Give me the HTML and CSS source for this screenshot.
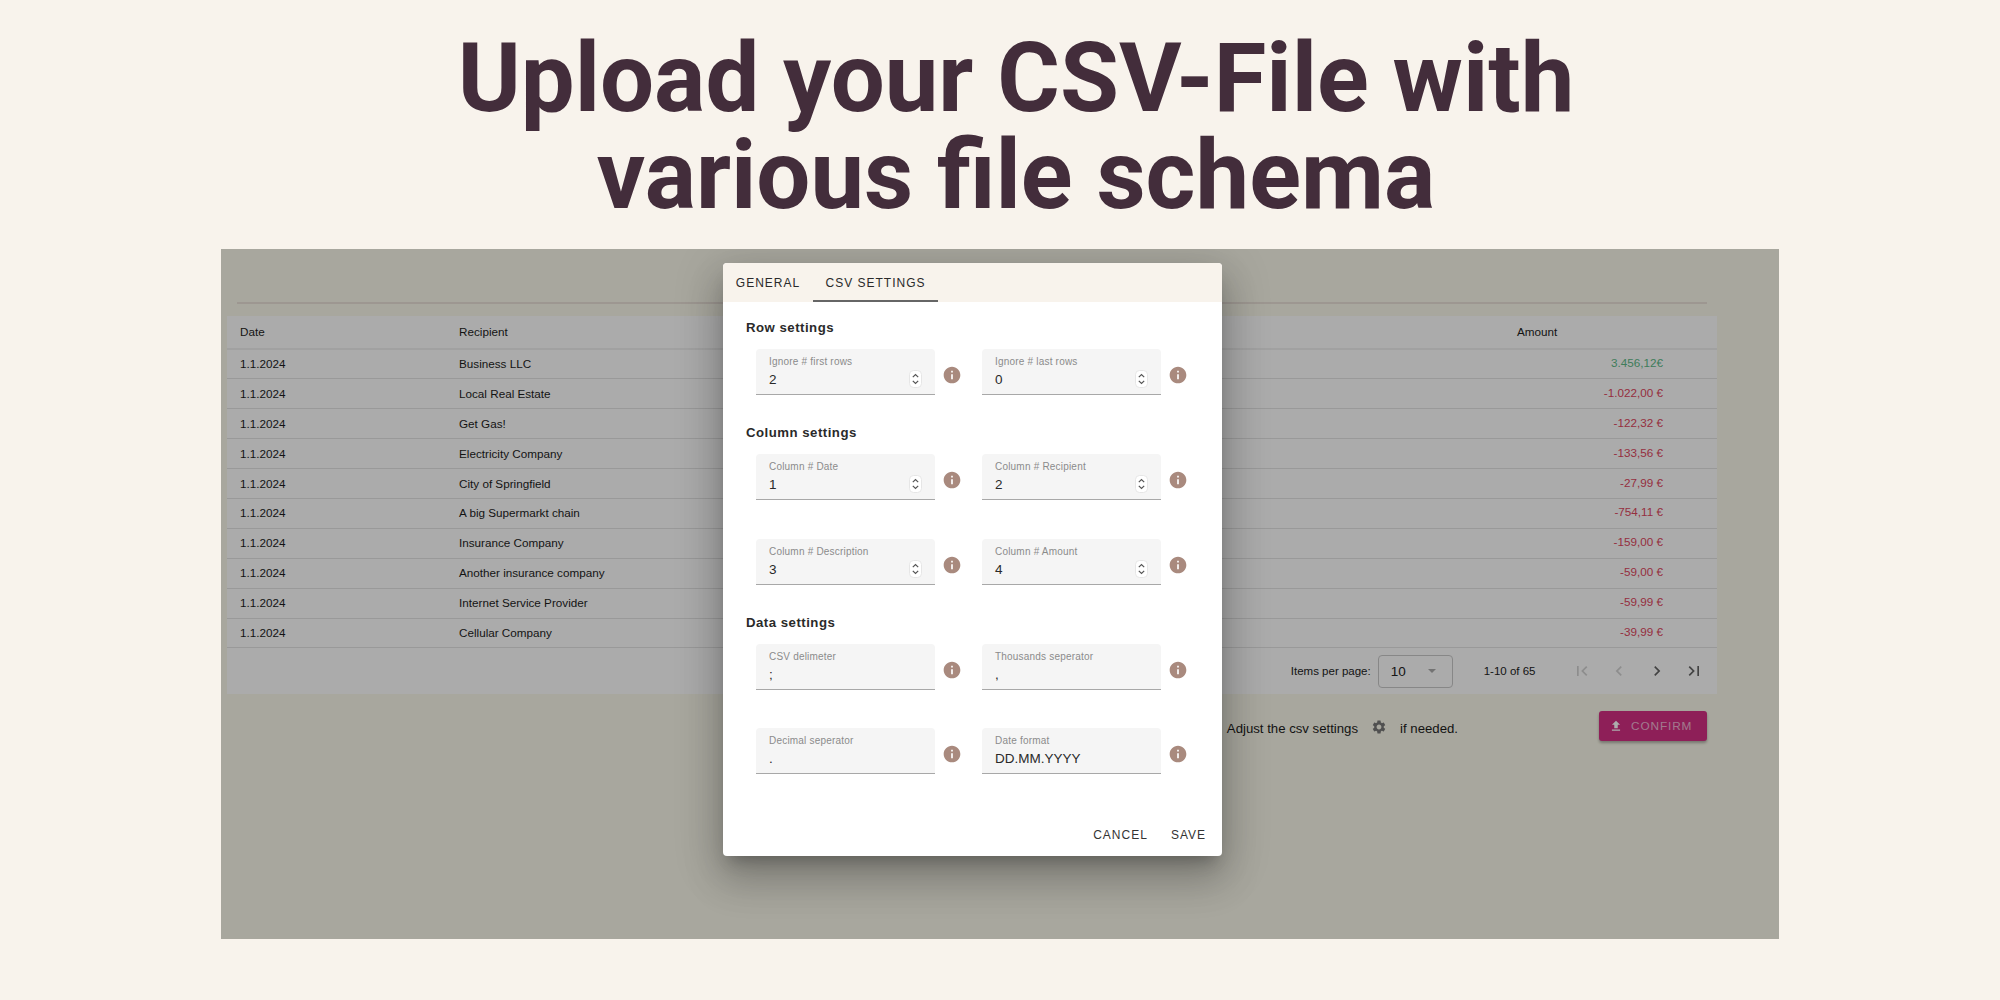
FILE: index.html
```html
<!DOCTYPE html>
<html lang="en">
<head>
    <meta charset="UTF-8">
    <title>Upload your CSV-File with various file schema</title>
    <link rel="stylesheet" href="styles.css">
</head>
<body>
    <svg class="icon-defs" width="0" height="0">
        <symbol id="i-info" viewBox="0 0 24 24"><path d="M12 2C6.48 2 2 6.48 2 12s4.48 10 10 10 10-4.48 10-10S17.52 2 12 2zm1 15h-2v-6h2v6zm0-8h-2V7h2v2z"/></symbol>
        <symbol id="i-gear" viewBox="0 0 24 24"><path d="M19.14 12.94c.04-.3.06-.61.06-.94 0-.32-.02-.64-.07-.94l2.03-1.58a.49.49 0 0 0 .12-.61l-1.92-3.32a.488.488 0 0 0-.59-.22l-2.39.96c-.5-.38-1.03-.7-1.62-.94l-.36-2.54a.484.484 0 0 0-.48-.41h-3.84c-.24 0-.43.17-.47.41l-.36 2.54c-.59.24-1.13.57-1.62.94l-2.39-.96c-.22-.08-.47 0-.59.22L2.74 8.87c-.12.21-.08.47.12.61l2.03 1.58c-.05.3-.09.63-.09.94s.02.64.07.94l-2.03 1.58a.49.49 0 0 0-.12.61l1.92 3.32c.12.22.37.29.59.22l2.39-.96c.5.38 1.03.7 1.62.94l.36 2.54c.05.24.24.41.48.41h3.84c.24 0 .44-.17.47-.41l.36-2.54c.59-.24 1.13-.56 1.62-.94l2.39.96c.22.08.47 0 .59-.22l1.92-3.32c.12-.22.07-.47-.12-.61l-2.01-1.58zM12 15.6c-1.98 0-3.6-1.62-3.6-3.6s1.62-3.6 3.6-3.6 3.6 1.62 3.6 3.6-1.62 3.6-3.6 3.6z"/></symbol>
        <symbol id="i-upload" viewBox="0 0 24 24"><path d="M9 16h6v-6h4l-7-7-7 7h4zm-4 2h14v2H5z"/></symbol>
        <symbol id="i-first" viewBox="0 0 24 24"><path d="M18.41 16.59L13.82 12l4.59-4.59L17 6l-6 6 6 6zM6 6h2v12H6z"/></symbol>
        <symbol id="i-prev" viewBox="0 0 24 24"><path d="M15.41 7.41L14 6l-6 6 6 6 1.41-1.41L10.83 12z"/></symbol>
        <symbol id="i-next" viewBox="0 0 24 24"><path d="M10 6L8.59 7.41 13.17 12l-4.58 4.59L10 18l6-6z"/></symbol>
        <symbol id="i-last" viewBox="0 0 24 24"><path d="M5.59 7.41L10.18 12l-4.59 4.59L7 18l6-6-6-6zM16 6h2v12h-2z"/></symbol>
        <symbol id="i-spin" viewBox="0 0 13 18">
            <rect x="0.5" y="0.5" width="12" height="17" rx="4" fill="#fff" stroke="#e6e6e6"/>
            <path d="M3.8 7.2L6.5 4.5l2.7 2.7M3.8 10.8l2.7 2.7 2.7-2.7" fill="none" stroke="#555" stroke-width="1.2"/>
        </symbol>
    </svg>

    <h1 class="headline">Upload your CSV-File with<br>various file schema</h1>

    <div class="shot">
        <div class="divider"></div>

        <div class="table-card">
            <table class="tx-table">
                <colgroup>
                    <col class="col-date"><col class="col-recipient"><col><col class="col-amount">
                </colgroup>
                <thead>
                    <tr><th>Date</th><th>Recipient</th><th></th><th>Amount</th></tr>
                </thead>
                <tbody>
                    <tr><td>1.1.2024</td><td>Business LLC</td><td></td><td class="amount pos">3.456,12€</td></tr>
                    <tr><td>1.1.2024</td><td>Local Real Estate</td><td></td><td class="amount neg">-1.022,00 €</td></tr>
                    <tr><td>1.1.2024</td><td>Get Gas!</td><td></td><td class="amount neg">-122,32 €</td></tr>
                    <tr><td>1.1.2024</td><td>Electricity Company</td><td></td><td class="amount neg">-133,56 €</td></tr>
                    <tr><td>1.1.2024</td><td>City of Springfield</td><td></td><td class="amount neg">-27,99 €</td></tr>
                    <tr><td>1.1.2024</td><td>A big Supermarkt chain</td><td></td><td class="amount neg">-754,11 €</td></tr>
                    <tr><td>1.1.2024</td><td>Insurance Company</td><td></td><td class="amount neg">-159,00 €</td></tr>
                    <tr><td>1.1.2024</td><td>Another insurance company</td><td></td><td class="amount neg">-59,00 €</td></tr>
                    <tr><td>1.1.2024</td><td>Internet Service Provider</td><td></td><td class="amount neg">-59,99 €</td></tr>
                    <tr><td>1.1.2024</td><td>Cellular Company</td><td></td><td class="amount neg">-39,99 €</td></tr>
                </tbody>
            </table>
            <div class="paginator">
                <span class="per-page">Items per page:</span>
                <div class="page-select"><span>10</span><i class="select-arrow"></i></div>
                <span class="page-range">1-10 of 65</span>
                <div class="page-btns">
                    <svg class="page-icon off"><use href="#i-first"/></svg>
                    <svg class="page-icon off"><use href="#i-prev"/></svg>
                    <svg class="page-icon"><use href="#i-next"/></svg>
                    <svg class="page-icon"><use href="#i-last"/></svg>
                </div>
            </div>
        </div>

        <div class="confirm-row">
            <span>Adjust the csv settings</span>
            <svg class="gear"><use href="#i-gear"/></svg>
            <span>if needed.</span>
            <button class="confirm-btn"><svg><use href="#i-upload"/></svg>CONFIRM</button>
        </div>

        <div class="scrim"></div>

        <div class="dialog">
            <div class="tabs">
                <div class="tab tab-general">GENERAL</div>
                <div class="tab tab-csv">CSV SETTINGS</div>
            </div>
            <div class="dialog-body">
                <h3 class="group-title">Row settings</h3>
                <div class="field-grid">
                    <div class="field-wrap">
                        <div class="field"><label>Ignore # first rows</label><div class="value">2</div><svg class="spin"><use href="#i-spin"/></svg></div>
                        <svg class="info"><use href="#i-info"/></svg>
                    </div>
                    <div class="field-wrap">
                        <div class="field"><label>Ignore # last rows</label><div class="value">0</div><svg class="spin"><use href="#i-spin"/></svg></div>
                        <svg class="info"><use href="#i-info"/></svg>
                    </div>
                </div>

                <h3 class="group-title">Column settings</h3>
                <div class="field-grid">
                    <div class="field-wrap">
                        <div class="field"><label>Column # Date</label><div class="value">1</div><svg class="spin"><use href="#i-spin"/></svg></div>
                        <svg class="info"><use href="#i-info"/></svg>
                    </div>
                    <div class="field-wrap">
                        <div class="field"><label>Column # Recipient</label><div class="value">2</div><svg class="spin"><use href="#i-spin"/></svg></div>
                        <svg class="info"><use href="#i-info"/></svg>
                    </div>
                    <div class="field-wrap">
                        <div class="field"><label>Column # Description</label><div class="value">3</div><svg class="spin"><use href="#i-spin"/></svg></div>
                        <svg class="info"><use href="#i-info"/></svg>
                    </div>
                    <div class="field-wrap">
                        <div class="field"><label>Column # Amount</label><div class="value">4</div><svg class="spin"><use href="#i-spin"/></svg></div>
                        <svg class="info"><use href="#i-info"/></svg>
                    </div>
                </div>

                <h3 class="group-title">Data settings</h3>
                <div class="field-grid">
                    <div class="field-wrap">
                        <div class="field"><label>CSV delimeter</label><div class="value">;</div></div>
                        <svg class="info"><use href="#i-info"/></svg>
                    </div>
                    <div class="field-wrap">
                        <div class="field"><label>Thousands seperator</label><div class="value">,</div></div>
                        <svg class="info"><use href="#i-info"/></svg>
                    </div>
                    <div class="field-wrap">
                        <div class="field"><label>Decimal seperator</label><div class="value">.</div></div>
                        <svg class="info"><use href="#i-info"/></svg>
                    </div>
                    <div class="field-wrap">
                        <div class="field"><label>Date format</label><div class="value">DD.MM.YYYY</div></div>
                        <svg class="info"><use href="#i-info"/></svg>
                    </div>
                </div>
            </div>
            <div class="dialog-actions">
                <span>CANCEL</span>
                <span>SAVE</span>
            </div>
        </div>
    </div>
</body>
</html>
```

FILE: styles.css
```css
* {
    box-sizing: border-box;
}

body {
    margin: 0;
    background-color: #f8f3ec;
    font-family: "Liberation Sans", Arial, sans-serif;
}

.icon-defs {
    position: absolute;
}

.headline {
    margin: 0;
    height: 249px;
    padding: 30px 0 0 32px;
    font-family: Roboto, sans-serif;
    font-size: 95.8px;
    font-weight: 700;
    line-height: 97px;
    text-align: center;
    font-variant-ligatures: common-ligatures;
    color: #432d3b;
}

.shot {
    position: relative;
    width: 1558px;
    height: 690px;
    margin: 0 auto;
    padding-top: 53px;
    overflow: hidden;
    background-color: #f8f7e9;
    font-size: 11.7px;
    color: #1c1c1c;
}

.divider {
    height: 2px;
    margin: 0 72px 0 16px;
    background-color: #e8dfd6;
}

.table-card {
    margin: 12px 62px 0 6px;
    background-color: #fcfcfc;
}

.tx-table {
    width: 100%;
    border-collapse: collapse;
    table-layout: fixed;
}

.col-date {
    width: 219px;
}

.col-recipient {
    width: 400px;
}

.col-amount {
    width: 213px;
}

.tx-table th,
.tx-table td {
    padding: 0 13px 1px;
    font-weight: 400;
    text-align: left;
    border-bottom: 1px solid #e2e2e2;
}

.tx-table th {
    height: 33px;
    border-bottom-width: 2px;
    border-bottom-color: #eee;
}

.tx-table td {
    height: 29.9px;
}

.tx-table .amount {
    padding: 0 54px 3px 0;
    text-align: right;
}

.pos {
    color: #5db887;
}

.neg {
    color: #dc465e;
}

.paginator {
    display: flex;
    align-items: center;
    justify-content: flex-end;
    height: 46px;
    padding-right: 13px;
    font-size: 11.5px;
    color: #222;
}

.per-page {
    margin-right: 7px;
}

.page-select {
    display: flex;
    align-items: center;
    justify-content: space-between;
    width: 75px;
    height: 33px;
    padding: 0 16px 0 12px;
    font-size: 13.5px;
    border: 1px solid #c8c8c8;
    border-radius: 4px;
}

.select-arrow {
    border-top: 4px solid #aaa;
    border-left: 4px solid transparent;
    border-right: 4px solid transparent;
}

.page-range {
    margin: 0 36px 0 31px;
}

.page-btns {
    display: flex;
    gap: 17.5px;
}

.page-icon {
    width: 20px;
    height: 20px;
    fill: #646464;
}

.page-icon.off {
    fill: #d0d0d0;
}

.confirm-row {
    display: flex;
    align-items: center;
    justify-content: flex-end;
    margin: 17px 72px 0 0;
    font-size: 13.2px;
}

.gear {
    width: 16px;
    height: 16px;
    margin: 2px 13px 0;
    fill: #777;
}

.confirm-row span {
    padding-top: 4px;
}

.confirm-btn {
    display: flex;
    align-items: center;
    gap: 8px;
    width: 108px;
    height: 30px;
    margin-left: 141px;
    padding: 0 0 0 10px;
    border: none;
    border-radius: 3px;
    background-color: #d22e82;
    box-shadow: 0 2px 3px rgba(0, 0, 0, 0.3);
    font-family: "Liberation Sans", Arial, sans-serif;
    font-size: 11.8px;
    letter-spacing: 0.9px;
    color: rgba(255, 255, 255, 0.65);
}

.confirm-btn svg {
    width: 14px;
    height: 14px;
    fill: #fff;
}

.scrim {
    position: absolute;
    top: 0;
    right: 0;
    bottom: 0;
    left: 0;
    background-color: rgba(0, 0, 0, 0.32);
}

.dialog {
    position: absolute;
    top: 14px;
    left: 502px;
    width: 499px;
    height: 593px;
    border-radius: 4px;
    background-color: #fff;
    box-shadow: 0 11px 15px -7px rgba(0, 0, 0, 0.25), 0 24px 38px 3px rgba(0, 0, 0, 0.16), 0 9px 46px 8px rgba(0, 0, 0, 0.14);
}

.tabs {
    display: flex;
    height: 39px;
    border-radius: 4px 4px 0 0;
    background-color: #f8f3ec;
    font-size: 12px;
    letter-spacing: 1px;
    color: #2a2a2a;
}

.tab {
    height: 39px;
    padding-top: 1px;
    line-height: 38px;
    text-align: center;
}

.tab-general {
    width: 90px;
}

.tab-csv {
    width: 125px;
    border-bottom: 2px solid #666;
}

.dialog-body {
    padding: 16px 0 0 23px;
}

.group-title {
    margin: 0 0 11px;
    font-size: 13.2px;
    font-weight: 700;
    line-height: 20px;
    letter-spacing: 0.5px;
    color: #2a2a2a;
}

.field-grid {
    display: grid;
    grid-template-columns: 226px 226px;
    row-gap: 38.5px;
    padding-left: 10px;
    margin-bottom: 28px;
}

.field-wrap {
    display: flex;
    align-items: center;
    gap: 6.5px;
}

.field {
    position: relative;
    width: 179px;
    height: 46px;
    padding: 6px 13px 0;
    border-bottom: 1px solid #a8a8a8;
    border-radius: 4px 4px 0 0;
    background-color: #f5f5f5;
}

.field label {
    display: block;
    font-size: 10px;
    line-height: 14px;
    letter-spacing: 0.2px;
    color: #8b8b8b;
}

.value {
    margin-top: 2px;
    font-size: 13.5px;
    line-height: 18px;
    color: #2a2a2a;
}

.spin {
    position: absolute;
    right: 13px;
    top: 21px;
    width: 13px;
    height: 18px;
}

.info {
    width: 20px;
    height: 20px;
    margin-top: 6px;
    fill: #a98a7e;
}

.dialog-actions {
    position: absolute;
    right: 16px;
    bottom: 14px;
    display: flex;
    gap: 23px;
    font-size: 12px;
    letter-spacing: 1px;
    color: #333;
}
```
